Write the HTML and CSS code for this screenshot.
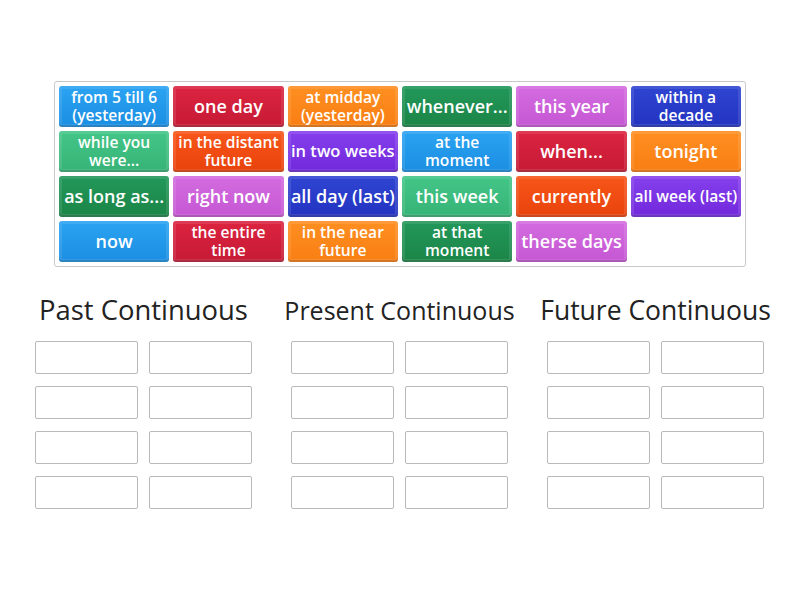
FILE: index.html
```html
<!DOCTYPE html>
<html lang="en">
<head>
  <meta charset="UTF-8" />
  <meta name="viewport" content="width=device-width, initial-scale=1.0"/>
  <title>Group sort - Continuous tenses</title>
  <link rel="stylesheet" href="styles.css">
</head>
<body>
  <div class="page">
    <div class="tray">
      <div class="tile blue small">from 5 till 6 (yesterday)</div>
      <div class="tile red">one day</div>
      <div class="tile orange small">at midday (yesterday)</div>
      <div class="tile dkgreen">whenever...</div>
      <div class="tile pink">this year</div>
      <div class="tile indigo small">within a decade</div>

      <div class="tile ltgreen small">while you were...</div>
      <div class="tile redorange small">in the distant future</div>
      <div class="tile purple fit">in two weeks</div>
      <div class="tile blue small">at the moment</div>
      <div class="tile red">when...</div>
      <div class="tile orange">tonight</div>

      <div class="tile dkgreen">as long as...</div>
      <div class="tile pink">right now</div>
      <div class="tile indigo">all day (last)</div>
      <div class="tile ltgreen">this week</div>
      <div class="tile redorange">currently</div>
      <div class="tile purple tight">all week (last)</div>

      <div class="tile blue">now</div>
      <div class="tile red small">the entire time</div>
      <div class="tile orange small">in the near future</div>
      <div class="tile dkgreen small">at that moment</div>
      <div class="tile pink">therse days</div>
    </div>

    <div class="groups">
      <div class="group">
        <h2 class="past">Past Continuous</h2>
        <div class="slots">
          <div class="slot"></div><div class="slot"></div>
          <div class="slot"></div><div class="slot"></div>
          <div class="slot"></div><div class="slot"></div>
          <div class="slot"></div><div class="slot"></div>
        </div>
      </div>
      <div class="group">
        <h2 class="present">Present Continuous</h2>
        <div class="slots">
          <div class="slot"></div><div class="slot"></div>
          <div class="slot"></div><div class="slot"></div>
          <div class="slot"></div><div class="slot"></div>
          <div class="slot"></div><div class="slot"></div>
        </div>
      </div>
      <div class="group">
        <h2 class="future">Future Continuous</h2>
        <div class="slots">
          <div class="slot"></div><div class="slot"></div>
          <div class="slot"></div><div class="slot"></div>
          <div class="slot"></div><div class="slot"></div>
          <div class="slot"></div><div class="slot"></div>
        </div>
      </div>
    </div>
  </div>
</body>
</html>
```

FILE: styles.css
```css
body { margin: 0; background: #fff; font-family: "Open Sans", "DejaVu Sans", sans-serif; color: #222; }
.page { padding-top: 81px; }

.tray {
  width: 692px; margin: 0 auto; padding: 4px; box-sizing: border-box;
  border: 1px solid #c8c8c8; border-radius: 3px;
  display: grid; grid-template-columns: repeat(6, 1fr); grid-auto-rows: 41px; gap: 4px 4px;
}

.tile {
  display: flex; align-items: center; justify-content: center; text-align: center;
  padding: 0 3px 2px; border-radius: 3px; color: #fff;
  font-weight: 600; font-size: 18px; line-height: 20px;
  box-shadow: inset 0 0 0 3px rgba(255,255,255,0.1), inset 0 -2px 0 rgba(0,0,0,0.18);
}
.tile.fit { font-size: 16.5px; }
.tile.tight { font-size: 15.6px; padding: 0 1px 2px; white-space: nowrap; }
.tile.small { font-size: 15.6px; line-height: 18px; }

.blue { background: linear-gradient(#2ba3f2, #1b8ee2); }
.red { background: linear-gradient(#dc2440, #c61a35); }
.orange { background: linear-gradient(#ff8f22, #f87e12); }
.dkgreen { background: linear-gradient(#22985a, #1b8547); }
.ltgreen { background: linear-gradient(#44c688, #36b376); }
.pink { background: linear-gradient(#d46ce0, #c557d3); }
.indigo { background: linear-gradient(#2f45d2, #2233c0); }
.redorange { background: linear-gradient(#f8561a, #e8420b); }
.purple { background: linear-gradient(#8640ec, #7128dc); }

.groups {
  width: 729px; margin: 26px 0 0 35px;
  display: grid; grid-template-columns: repeat(3, 217px); gap: 39px;
}
.group h2 {
  margin: 0 -10px 14px; font-size: 26px; font-weight: 400; line-height: 34px;
  text-align: center; white-space: nowrap;
}
.group h2.past { font-size: 27.4px; }
.group h2.present { font-size: 25px; }
.group h2.future { font-size: 26.5px; }
.slots { display: grid; grid-template-columns: 103px 103px; grid-auto-rows: 33px; gap: 12px 11px; }
.slot { border: 1px solid #b9b9b9; border-radius: 2px; background: #fff; }
```
